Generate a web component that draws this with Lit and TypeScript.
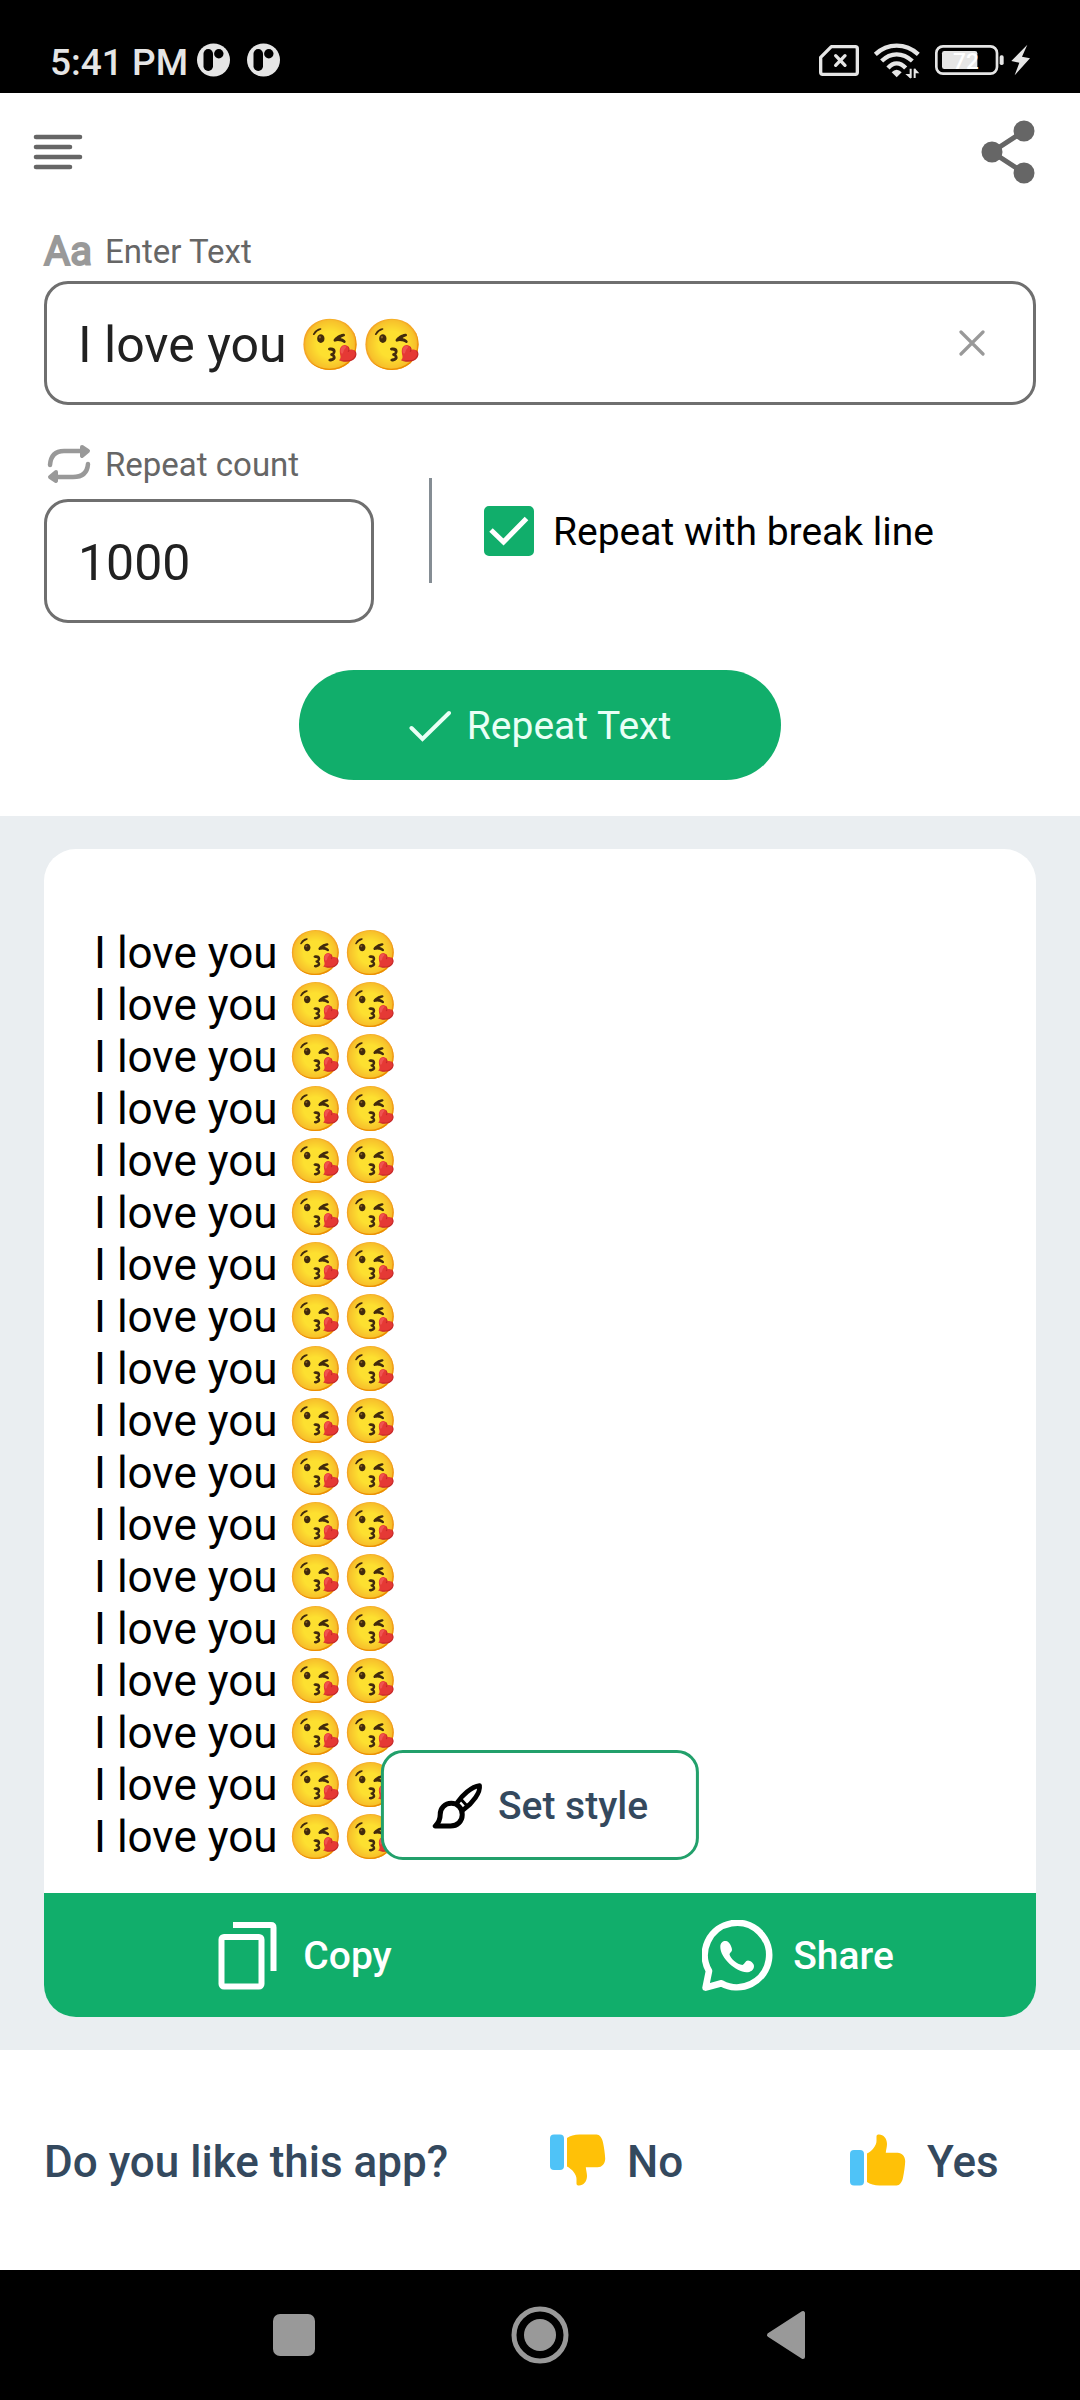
import { LitElement, html, css, svg } from "lit";
import { customElement, state } from "lit/decorators.js";

const VISIBLE_LINES = 18;

const menuIcon = svg`<svg width="50" height="38" viewBox="0 0 50 38" fill="none" stroke="#666" stroke-width="4.6" stroke-linecap="round" aria-hidden="true">
  <path d="M3 4H47M3 14H37M3 24H47M3 34H37"/></svg>`;

const shareNodesIcon = svg`<svg width="54" height="64" viewBox="0 0 54 64" fill="#666" aria-hidden="true">
  <path d="M43 11L11 32L43 53" fill="none" stroke="#666" stroke-width="5"/>
  <circle cx="43" cy="11" r="10.5"/><circle cx="11" cy="32" r="10.5"/><circle cx="43" cy="53" r="10.5"/></svg>`;

const notificationIcon = svg`<svg width="33" height="39" viewBox="0 0 33 39" aria-hidden="true">
  <circle cx="16.5" cy="17" r="16.5" fill="#e5e5e5"/>
  <rect x="6.5" y="6" width="9.5" height="22" rx="4.7"/><circle cx="21.8" cy="10.8" r="4.7"/></svg>`;

const simIcon = svg`<svg width="42" height="33" viewBox="114 135 126 99" fill="none" stroke="#e5e5e5" stroke-width="10" stroke-linejoin="round" stroke-linecap="round" aria-hidden="true">
  <path d="M154 143H226Q232 143 232 149V220Q232 226 226 226H128Q122 226 122 220V175Z"/>
  <path d="M167 170L195 199M195 170L167 199"/></svg>`;

const wifiIcon = svg`<svg width="48" height="37" viewBox="279 126 144 111" fill="none" stroke="#e5e5e5" stroke-width="13" aria-hidden="true">
  <path d="M286 163Q314 137 350 137T415 163"/>
  <path d="M305 183Q325 163 350 163T397 183"/>
  <path d="M324 204Q336 190 350 190T377 204"/>
  <path d="M350 209Q358 209 365 217L350 232L335 217Q342 209 350 209Z" fill="#e5e5e5" stroke="none"/>
  <path d="M392 206V234M404 234V206" stroke-width="6"/>
  <path d="M376 222H392V236ZM404 205V220H418Z" fill="#e5e5e5" stroke="none"/></svg>`;

const batteryIcon = svg`<svg width="70" height="33" viewBox="462 132 210 99" aria-hidden="true">
  <rect x="469" y="139" width="182" height="82" rx="20" fill="none" stroke="#e5e5e5" stroke-width="8"/>
  <rect x="486" y="153" width="106" height="54" rx="7" fill="#e5e5e5"/>
  <rect x="659" y="166" width="12" height="29" rx="5" fill="#e5e5e5"/>
  <text x="519" y="206" fill="#fff" font-family="Roboto, sans-serif" font-weight="500" font-size="68">72</text></svg>`;

const boltIcon = svg`<svg width="19" height="33" viewBox="692 135 57 99" fill="#e5e5e5" aria-hidden="true">
  <path d="M741 137L693 186L717 191L703 229L749 178L725 173Z"/></svg>`;

const repeatIcon = svg`<svg width="48" height="40" viewBox="0 0 48 40" fill="none" stroke="#999" stroke-width="4.5" stroke-linecap="round" stroke-linejoin="round" aria-hidden="true">
  <path d="M6 20Q7 6 20 6H40M44 19Q43 32 29 32H10"/>
  <path d="M38 2L44 6L38 11ZM12 27L6 32L12 36Z" fill="#999" stroke-width="4"/></svg>`;

const clearIcon = svg`<svg width="26" height="26" viewBox="0 0 26 26" fill="none" stroke="#999" stroke-width="3.2" stroke-linecap="round" aria-hidden="true">
  <path d="M2 2L24 24M24 2L2 24"/></svg>`;

const tickIcon = svg`<svg class="tick" width="50" height="50" viewBox="0 0 50 50" fill="none" stroke="#fff" stroke-width="5" aria-hidden="true">
  <path d="M7 24L19.5 36L42.5 12.5"/></svg>`;

const checkIcon = svg`<svg width="42" height="32" viewBox="0 0 42 32" fill="none" stroke="#e9fff6" stroke-width="4" stroke-linecap="round" aria-hidden="true">
  <path d="M2.5 18L13.5 29L40 3"/></svg>`;

const brushIcon = svg`<svg width="52" height="48" viewBox="214 179 156 144" fill="none" stroke="#000" stroke-width="15" stroke-linejoin="round" stroke-linecap="round" aria-hidden="true">
  <path d="M224 311H270C290 311 305 297 305 277C305 257 291 243 272 243C253 243 239 257 239 276C239 291 234 302 224 311Z"/>
  <path d="M290 241C304 220 332 193 357 190C360 210 337 242 309 262" stroke-width="14"/>
  <path d="M300 229L319 250" stroke-width="9"/></svg>`;

const copyIcon = svg`<svg width="72" height="72" viewBox="-6 -2 72 72" fill="none" stroke="#fff" stroke-width="6" aria-hidden="true">
  <rect x="3.5" y="15" width="40" height="49.5" rx="2.5"/>
  <path d="M15 3H53Q55.500 3 55.500 5.500V49"/></svg>`;

const whatsappIcon = svg`<svg width="72" height="72" viewBox="0 0 72 72" aria-hidden="true">
  <path d="M7 51L3.600 67.600L19.500 63.300A32.200 32.200 0 1 0 7 51Z" fill="none" stroke="#fff" stroke-width="6.600" stroke-linejoin="round"/>
  <path d="M18.300 27C18.300 22.500 21 20.800 24 21C27 21.300 30 26.500 30 30C30 32 27.500 32.500 27.500 34.500C28.500 38.500 35 44.500 40.500 45C42.500 44 43.500 40.500 46 40.500C48.500 40.500 52 43.500 52 46C52 50 48.500 52.300 44.500 52.300C34 52 18.300 38 18.300 27Z" fill="#fff"/></svg>`;

const thumbShape = svg`<rect x="0" y="16" width="14" height="35.500" rx="4" fill="#4fc3f7"/>
  <path fill="#ffc107" d="M17 19.500C22 17 26.500 11.500 26.500 7V2.500C26.500 1 27.500 .500 29 .500C33.500 .500 37 4.500 37 10C37 13 36 16 35.800 18.700H47.500C52 18.700 55.300 22.500 55.200 27.500C55 32 54 39 53 43.500C52.200 48 49.500 51.500 46.500 51.500H29.500C24.500 51.500 20 50 17 48Z"/>`;

const thumbUpIcon = svg`<svg width="56" height="52" viewBox="0 0 56 52" aria-hidden="true">${thumbShape}</svg>`;
const thumbDownIcon = svg`<svg width="56" height="52" viewBox="0 0 56 52" aria-hidden="true"><g transform="matrix(1 0 0 -1 0 52)">${thumbShape}</g></svg>`;

const recentsIcon = svg`<svg width="42" height="42" viewBox="0 0 42 42" aria-hidden="true"><rect width="42" height="42" rx="7" fill="#999"/></svg>`;
const homeIcon = svg`<svg width="58" height="58" viewBox="0 0 58 58" aria-hidden="true">
  <circle cx="29" cy="29" r="26" fill="none" stroke="#999" stroke-width="5"/><circle cx="29" cy="29" r="16" fill="#999"/></svg>`;
const backIcon = svg`<svg width="40" height="50" viewBox="0 0 40 50" aria-hidden="true">
  <path d="M37 3V47L3 25Z" fill="#999" stroke="#999" stroke-width="4" stroke-linejoin="round"/></svg>`;

@customElement("app-root")
export class AppRoot extends LitElement {
  @state() private text = "I love you 😘😘";
  @state() private count = "1000";
  @state() private breakLine = true;

  static styles = css`
    :host {
      display: flex;
      flex-direction: column;
      min-height: 100vh;
      background: #fff;
      color: #000;
      font-family: Roboto, "Noto Color Emoji", sans-serif;
    }
    * {
      box-sizing: border-box;
    }
    svg {
      display: block;
      flex: none;
    }
    button,
    input {
      margin: 0;
      padding: 0;
      border: 0;
      background: none;
      color: inherit;
      font: inherit;
    }
    button {
      cursor: pointer;
    }
    .status {
      display: flex;
      align-items: center;
      height: 93px;
      padding: 32px 50px 0;
      background: #000;
      color: #e5e5e5;
      font-size: 37px;
      font-weight: 500;
    }
    .notices {
      display: flex;
      gap: 17px;
      margin-left: 9px;
    }
    .signals {
      display: flex;
      align-items: center;
      gap: 13px;
      margin-left: auto;
      padding-bottom: 4px;
    }
    .charge {
      display: flex;
      gap: 7px;
    }
    .toolbar {
      display: flex;
      align-items: center;
      justify-content: space-between;
      height: 118px;
      padding: 0 45px 0 33px;
    }
    .form {
      display: flex;
      flex-direction: column;
      gap: 40px;
      padding: 21px 44px 36px;
    }
    .field {
      display: flex;
      flex-direction: column;
      gap: 9px;
    }
    .field.count {
      flex: 0 1 330px;
      min-width: 0;
      gap: 14px;
    }
    .label {
      display: flex;
      align-items: center;
      gap: 13px;
      height: 40px;
      color: #666;
      font-size: 33px;
      line-height: 40px;
    }
    .letters {
      width: 48px;
      color: #999;
      font-size: 40px;
      text-align: center;
      -webkit-text-stroke: 2px #999;
    }
    .box {
      display: flex;
      align-items: center;
      height: 124px;
      padding: 0 48px 0 31px;
      border: 3px solid #6f6f6f;
      border-radius: 24px;
    }
    .box input {
      flex: 1;
      min-width: 0;
      height: 100%;
      padding-top: 3px;
      outline: none;
      color: #212121;
      font-size: 50px;
    }
    .options {
      display: flex;
      align-items: center;
    }
    .rule {
      width: 3px;
      height: 105px;
      margin: 0 52px 7px 55px;
      background: #858d94;
    }
    .break {
      display: flex;
      align-items: center;
      gap: 19px;
      padding-bottom: 6px;
      font-size: 39px;
    }
    .break-text {
      padding-top: 2px;
    }
    .checkbox {
      display: grid;
    }
    .checkbox > * {
      grid-area: 1 / 1;
    }
    .checkbox input {
      width: 50px;
      height: 50px;
      appearance: none;
      border: 4px solid #6f6f6f;
      border-radius: 5px;
    }
    .checkbox input:checked {
      border-color: #11ae6b;
      background: #11ae6b;
    }
    .tick {
      pointer-events: none;
    }
    .repeat {
      display: flex;
      align-items: center;
      align-self: center;
      gap: 16px;
      height: 110px;
      margin-top: 7px;
      padding: 2px 110px 0;
      border-radius: 55px;
      background: #11ae6b;
      color: #e9fff6;
      font-size: 39px;
    }
    .result {
      display: flex;
      flex: 1;
      padding: 33px 44px;
      background: #eaeef1;
    }
    .card {
      display: flex;
      flex: 1;
      flex-direction: column;
      overflow: hidden;
      border-radius: 32px;
      background: #fff;
    }
    .output {
      position: relative;
      flex: 1;
      padding: 78px 50px 30px;
      font-size: 44px;
      line-height: 52px;
    }
    .lines {
      margin: 0;
      white-space: pre-line;
    }
    .style {
      position: absolute;
      bottom: 33px;
      left: 50%;
      display: flex;
      align-items: center;
      gap: 14px;
      height: 110px;
      padding: 2px 48px 0;
      border: 3px solid #22a06b;
      border-radius: 22px;
      background: #fff;
      color: #34495e;
      font-size: 39px;
      font-weight: 500;
      white-space: nowrap;
      transform: translateX(-50%);
    }
    .actions {
      display: grid;
      grid-template-columns: 1fr 1fr;
      height: 124px;
      background: #11ae6b;
      color: #fff;
      font-size: 39px;
      font-weight: 500;
    }
    .actions button {
      display: flex;
      align-items: center;
      justify-content: center;
      gap: 19px;
      padding: 2px 0 0 20px;
    }
    .feedback {
      display: grid;
      grid-template-columns: 1fr 300px 186px;
      align-items: center;
      height: 220px;
      padding: 0 44px;
      color: #34495e;
      font-size: 44px;
      font-weight: 500;
    }
    .feedback button {
      display: flex;
      align-items: center;
      gap: 21px;
    }
    .question,
    .answer {
      margin: 0;
      padding-top: 4px;
    }
    .system {
      display: grid;
      grid-template-columns: repeat(3, 1fr);
      place-items: center;
      height: 130px;
      padding: 0 171px;
      background: #000;
    }
  `;

  private get output(): string {
    const total = Math.min(Number(this.count) || 0, VISIBLE_LINES);
    return Array(total).fill(this.text).join(this.breakLine ? "\n" : " ");
  }

  render() {
    return html`
      <div class="status">
        <span>5:41 PM</span>
        <div class="notices">${notificationIcon}${notificationIcon}</div>
        <div class="signals">
          ${simIcon}${wifiIcon}
          <div class="charge">${batteryIcon}${boltIcon}</div>
        </div>
      </div>

      <header class="toolbar">
        <button type="button" aria-label="Menu">${menuIcon}</button>
        <button type="button" aria-label="Share app">${shareNodesIcon}</button>
      </header>

      <form class="form" @submit=${(e: Event) => e.preventDefault()}>
        <div class="field">
          <label class="label" for="text"><span class="letters" aria-hidden="true">Aa</span>Enter Text</label>
          <div class="box">
            <input id="text" type="text" .value=${this.text}
              @input=${(e: Event) => (this.text = (e.target as HTMLInputElement).value)} />
            <button type="button" aria-label="Clear" @click=${() => (this.text = "")}>${clearIcon}</button>
          </div>
        </div>

        <div class="options">
          <div class="field count">
            <label class="label" for="count">${repeatIcon}Repeat count</label>
            <div class="box">
              <input id="count" type="text" inputmode="numeric" .value=${this.count}
                @input=${(e: Event) => (this.count = (e.target as HTMLInputElement).value)} />
            </div>
          </div>
          <div class="rule"></div>
          <label class="break" for="break">
            <span class="checkbox">
              <input id="break" type="checkbox" .checked=${this.breakLine}
                @change=${(e: Event) => (this.breakLine = (e.target as HTMLInputElement).checked)} />
              ${tickIcon}
            </span>
            <span class="break-text">Repeat with break line</span>
          </label>
        </div>

        <button class="repeat" type="submit">${checkIcon}Repeat Text</button>
      </form>

      <main class="result">
        <section class="card">
          <div class="output">
            <p class="lines">${this.output}</p>
            <button class="style" type="button">${brushIcon}Set style</button>
          </div>
          <div class="actions">
            <button type="button">${copyIcon}Copy</button>
            <button type="button">${whatsappIcon}Share</button>
          </div>
        </section>
      </main>

      <section class="feedback">
        <p class="question">Do you like this app?</p>
        <button type="button">${thumbDownIcon}<span class="answer">No</span></button>
        <button type="button">${thumbUpIcon}<span class="answer">Yes</span></button>
      </section>

      <nav class="system">
        <button type="button" aria-label="Recent apps">${recentsIcon}</button>
        <button type="button" aria-label="Home">${homeIcon}</button>
        <button type="button" aria-label="Back">${backIcon}</button>
      </nav>
    `;
  }
}
